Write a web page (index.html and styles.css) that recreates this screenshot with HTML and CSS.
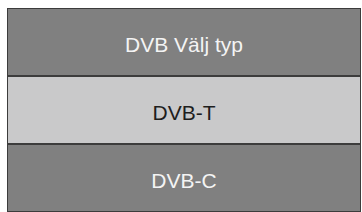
FILE: index.html
```html
<!DOCTYPE html>
<html>
<head>
<meta charset="utf-8">
<link rel="stylesheet" href="styles.css">
</head>
<body>
<div class="menu">
  <div class="row dark divided">DVB Välj typ</div>
  <div class="row light divided">DVB-T</div>
  <div class="row dark">DVB-C</div>
</div>
</body>
</html>
```
FILE: styles.css
```css
html, body {
  margin: 0;
  padding: 0;
  background: #ffffff;
}
body {
  padding: 8px 1px 0 7px;
  font-family: "Liberation Sans", Arial, sans-serif;
}
.menu {
  width: 354px;
  border: 1px solid #3c3c3c;
  box-sizing: border-box;
}
.row {
  height: 66px;
  display: flex;
  align-items: center;
  justify-content: center;
  font-size: 21px;
  padding-top: 5px;
  box-sizing: border-box;
}
.divided {
  height: 68px;
  border-bottom: 2px solid #3c3c3c;
}
.dark {
  background: #808080;
  color: #f4f4f4;
}
.light {
  background: #c9c9ca;
  color: #1e1e1e;
}
```
